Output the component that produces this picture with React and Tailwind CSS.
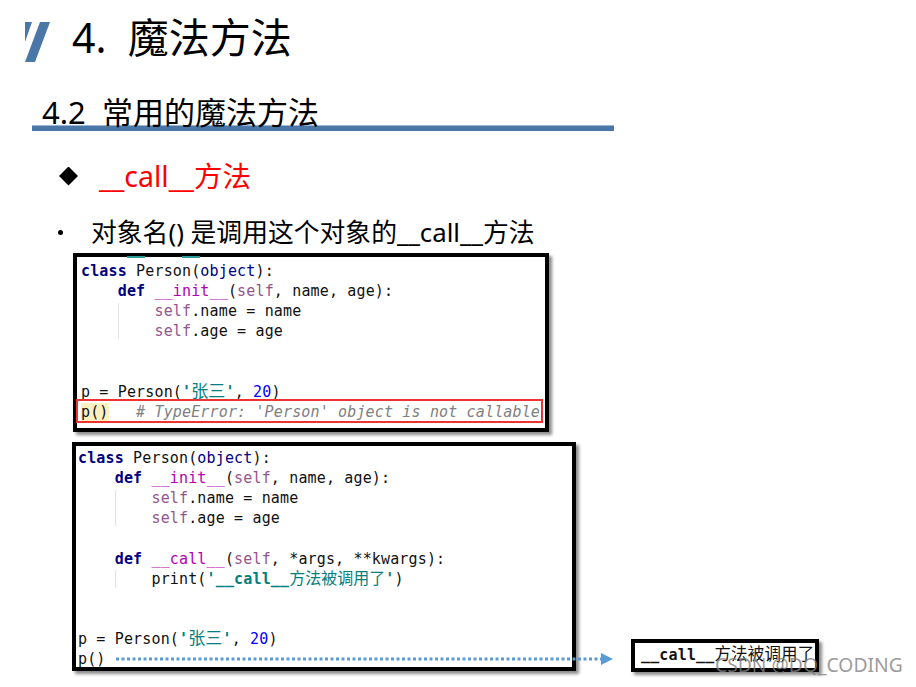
const cjk = "font-['Noto_Sans','Noto_Sans_CJK_SC',sans-serif]";
const K = ({ children }) => <span className="font-bold text-[#000080]">{children}</span>;
const B = ({ children }) => <span className="text-[#000080]">{children}</span>;
const M = ({ children }) => <span className="text-[#b200b2]">{children}</span>;
const S = ({ children }) => <span className="text-[#94558d]">{children}</span>;
const Str = ({ children }) => <span className="font-bold text-[#008080]">{children}</span>;
const Zh = ({ children }) => <span className="font-normal text-[17px] leading-[1]">{children}</span>;
const ZhSmall = ({ children }) => <span className="font-normal text-[16px] tracking-normal leading-[1]">{children}</span>;
const N = ({ children }) => <span className="text-[#0000ff]">{children}</span>;
const Blank = () => <div className="h-[20.15px]" />;
const Line = ({ children, indent = 0 }) => (
  <div className="h-[20.15px] leading-[20.15px] whitespace-pre">{" ".repeat(indent)}{children}</div>
);
const Guide = ({ top, left, height }) => (
  <div className="absolute w-px bg-[#e2e2e2]" style={{ top, left, height }} />
);
const codeFont = "font-['DejaVu_Sans_Mono','Noto_Sans_CJK_SC',monospace] text-[15px] tracking-[0.15px] text-[#111]";
const shadow = "shadow-[3px_3px_3px_rgba(0,0,0,0.45)]";

export default function App() {
  return (
    <div className={`relative w-[916px] h-[687px] overflow-hidden bg-white text-black ${cjk}`}>
      <header className="flex items-start h-[74px] pt-[22px] pl-[25px]">
        <svg width="25" height="40" viewBox="0 0 25 40" className="shrink-0">
          <polygon points="0,0 7,0 0,20" fill="#4a76a8" />
          <polygon points="15,0 25,0 10,40 0,40" fill="#4a76a8" />
        </svg>
        <h1 className="ml-[22px] -mt-[15px] text-[41px] leading-[60px] font-normal whitespace-pre">4.  魔法方法</h1>
      </header>
      <div className="ml-[32px] w-[582px] h-[57px] pl-[10px] border-b-[5px] border-[#4a76a8] shadow-[inset_0_-1px_0_#9db6d3]">
        <h2 className="pt-[16px] text-[31px] leading-[45px] whitespace-pre">4.2  常用的魔法方法</h2>
      </div>
      <div className="flex items-center ml-[59px] mt-[23px] h-[44px]">
        <span className="block w-[19px] h-[19px] bg-black [clip-path:polygon(50%_0,100%_50%,50%_100%,0_50%)]" />
        <span className="ml-[21px] text-[28.5px] leading-[44px] text-[#ff0000] whitespace-pre">__call__方法</span>
      </div>
      <div className="flex items-center ml-[58px] mt-[13px] h-[42px]">
        <span className="block w-[5px] h-[5px] rounded-full bg-black" />
        <span className="ml-[28px] text-[25.8px] leading-[42px] whitespace-pre">对象名() 是调用这个对象的__call__方法</span>
      </div>

      <div className={`relative ml-[73px] mt-0 w-[476px] h-[179px] border-4 border-black bg-white pl-[4px] pt-[4px] ${shadow} ${codeFont}`}>
        <div className="absolute left-[50px] top-[-1px] w-[18px] h-[2px] bg-[#2a9d9d]" />
        <div className="absolute left-[105px] top-[-1px] w-[18px] h-[2px] bg-[#2a9d9d]" />
        <Guide top={46} left={41} height={36} />
        <Line><K>class</K> Person(<B>object</B>):</Line>
        <Line indent={4}><K>def</K> <M>__init__</M>(<S>self</S>, name, age):</Line>
        <Line indent={8}><S>self</S>.name = name</Line>
        <Line indent={8}><S>self</S>.age = age</Line>
        <Blank />
        <Blank />
        <Line>p = Person(<Str>'<Zh>张三</Zh>'</Str>, <N>20</N>)</Line>
        <Line><span className="bg-[#fcefc0]">p()</span>   <span className="italic text-[#808080]"># TypeError: 'Person' object is not callable</span></Line>
        <div className="absolute left-[-1px] top-[142px] w-[467px] h-[24px] border-2 border-[#ee3333]" />
      </div>

      <div className={`relative ml-[72px] mt-[10px] w-[504px] h-[229px] border-4 border-black bg-white pl-[2px] pt-[2px] ${shadow} ${codeFont}`}>
        <Guide top={44} left={39} height={36} />
        <Guide top={124} left={39} height={18} />
        <Line><K>class</K> Person(<B>object</B>):</Line>
        <Line indent={4}><K>def</K> <M>__init__</M>(<S>self</S>, name, age):</Line>
        <Line indent={8}><S>self</S>.name = name</Line>
        <Line indent={8}><S>self</S>.age = age</Line>
        <Blank />
        <Line indent={4}><K>def</K> <M>__call__</M>(<S>self</S>, *args, **kwargs):</Line>
        <Line indent={8}>print(<Str>'__call__<ZhSmall>方法被调用了</ZhSmall>'</Str>)</Line>
        <Blank />
        <Blank />
        <Line>p = Person(<Str>'<Zh>张三</Zh>'</Str>, <N>20</N>)</Line>
        <Line>p()</Line>
      </div>

      <svg width="500" height="12" viewBox="0 0 500 12" className="absolute left-[116px] top-[653px]">
        <line x1="0" y1="6" x2="486" y2="6" stroke="#5b9bd5" strokeWidth="3" strokeDasharray="3 2.5" />
        <polygon points="485,0 497,6 485,12" fill="#5b9bd5" />
      </svg>

      <div className={`absolute left-[631px] top-[639px] w-[188px] h-[33px] border-4 border-black bg-white pl-[6px] leading-[25px] whitespace-pre ${shadow} ${codeFont}`}>
        <span className="font-bold">__call__</span><span className="text-[16.5px] leading-[1]">方法被调用了</span>
      </div>

      <div className="absolute left-[715px] top-[651px] text-[19.3px] leading-[28px] text-[#808080]/80 whitespace-pre font-['Noto_Sans',sans-serif]">CSDN @DQ_CODING</div>
    </div>
  );
}
